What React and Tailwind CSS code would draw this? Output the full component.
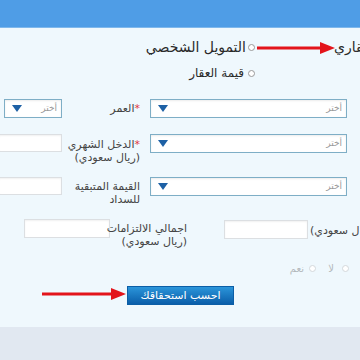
const font = { fontFamily: '"DejaVu Sans", Tahoma, sans-serif' };

function Radio({ faded }) {
  return (
    <span
      className={`block h-[7px] w-[7px] shrink-0 rounded-full border bg-white ${
        faded ? 'border-[#d4d8dc]' : 'border-[#9a9a9a]'
      }`}
    />
  );
}

function Select({ className }) {
  return (
    <div
      className={`flex h-[19px] shrink-0 items-center justify-between border border-[#7eaec6] bg-white pl-[7px] pr-[4px] shadow-[inset_0_1px_2px_rgba(0,0,0,0.08)] ${className}`}
    >
      <svg width="10" height="7" viewBox="0 0 10 7">
        <path d="M0 0H10L5 7Z" fill="#1d60a5" />
      </svg>
      <span dir="rtl" className="text-[9px] text-[#9a9a9a]">
        أختر
      </span>
    </div>
  );
}

function Input({ className }) {
  return (
    <div
      className={`h-[18px] shrink-0 border border-[#dcdfe2] bg-white shadow-[inset_0_1px_2px_rgba(0,0,0,0.06)] ${className}`}
    />
  );
}

function Label({ children, className }) {
  return (
    <div
      dir="rtl"
      className={`shrink-0 whitespace-nowrap text-right text-[11px] leading-[13px] text-[#444] ${className}`}
    >
      {children}
    </div>
  );
}

function Arrow({ className, width }) {
  return (
    <svg className={`absolute ${className}`} width={width} height="12" viewBox={`0 0 ${width} 12`}>
      <rect x="0" y="4.5" width={width - 12} height="3" fill="#e3141b" />
      <path d={`M${width - 15} 0L${width} 6L${width - 15} 12Z`} fill="#e3141b" />
    </svg>
  );
}

export default function App() {
  return (
    <div className="relative h-[360px] w-[360px] overflow-hidden bg-[#eff8fd]" style={font}>
      <div className="h-[28px] border-b border-[#7fb8ec] bg-[#4f9de6]" />

      {/* loan type */}
      <div className="mt-[10px] flex h-[18px] items-center text-[#2a2a2a]">
        <div className="flex w-[246px] shrink-0 justify-end">
          <span dir="rtl" className="whitespace-nowrap text-[14px]">
            التمويل الشخصي
          </span>
        </div>
        <span className="ml-[2px]">
          <Radio />
        </span>
        <span className="w-[79px] shrink-0" />
        <span dir="rtl" className="shrink-0 whitespace-nowrap text-[14px]">
          التمويل العقاري
        </span>
      </div>

      <div className="mt-[8px] flex h-[18px] items-center text-[#2a2a2a]">
        <div className="flex w-[244px] shrink-0 justify-end">
          <span dir="rtl" className="whitespace-nowrap text-[12px]">
            قيمة العقار
          </span>
        </div>
        <span className="ml-[4px]">
          <Radio />
        </span>
      </div>

      {/* age */}
      <div className="mt-[17px] flex h-[19px] items-start">
        <Select className="ml-[4px] w-[58px]" />
        <Label className="mt-[3px] w-[80px] pr-[2px]">
          <span className="text-[#e0383e]">*</span>العمر
        </Label>
        <Select className="ml-[8px] w-[197px]" />
      </div>

      {/* monthly income */}
      <div className="mt-[16px] flex h-[19px] items-start">
        <Input className="ml-[-2px] w-[64px]" />
        <Label className="mt-[4px] w-[80px] pr-[2px]">
          <span className="text-[#e0383e]">*</span>الدخل الشهري
          <br />
          (ريال سعودي)
        </Label>
        <Select className="ml-[8px] w-[197px]" />
      </div>

      {/* remaining */}
      <div className="mt-[24px] flex h-[19px] items-start">
        <Input className="ml-[-2px] w-[64px]" />
        <Label className="mt-[3px] w-[80px] pr-[2px]">
          القيمة المتبقية
          <br />
          للسداد
        </Label>
        <Select className="ml-[8px] w-[197px]" />
      </div>

      {/* obligations */}
      <div className="mt-[23px] flex h-[20px] items-start">
        <Input className="ml-[24px] h-[19px] w-[86px]" />
        <Label className="mt-[3px] w-[78px] pr-[1px]">
          اجمالي الالتزامات
          <br />
          (ريال سعودي)
        </Label>
        <Input className="ml-[36px] mt-[1px] h-[19px] w-[84px]" />
        <Label className="ml-[2px] mt-[5px]">(ريال سعودي)</Label>
      </div>

      {/* yes / no */}
      <div className="mt-[22px] flex h-[14px] items-center text-[10px] text-[#b4b8bc]">
        <div className="flex w-[304px] shrink-0 justify-end">
          <span dir="rtl">نعم</span>
        </div>
        <span className="ml-[5px]">
          <Radio faded />
        </span>
        <div className="flex w-[18px] shrink-0 justify-end">
          <span dir="rtl">لا</span>
        </div>
        <span className="ml-[8px]">
          <Radio faded />
        </span>
      </div>

      <div className="mt-[11px] flex">
        <button
          dir="rtl"
          className="ml-[127px] h-[19px] w-[107px] border border-[#0b5ea6] bg-gradient-to-b from-[#2b95da] to-[#0a5ea9] text-[11px] leading-[17px] text-white"
        >
          احسب استحقاقك
        </button>
      </div>

      <div className="mt-[22px] h-[40px] bg-[#e1e8f1]" />

      <Arrow className="left-[257px] top-[42px]" width={78} />
      <Arrow className="left-[42px] top-[288px]" width={84} />
    </div>
  );
}
